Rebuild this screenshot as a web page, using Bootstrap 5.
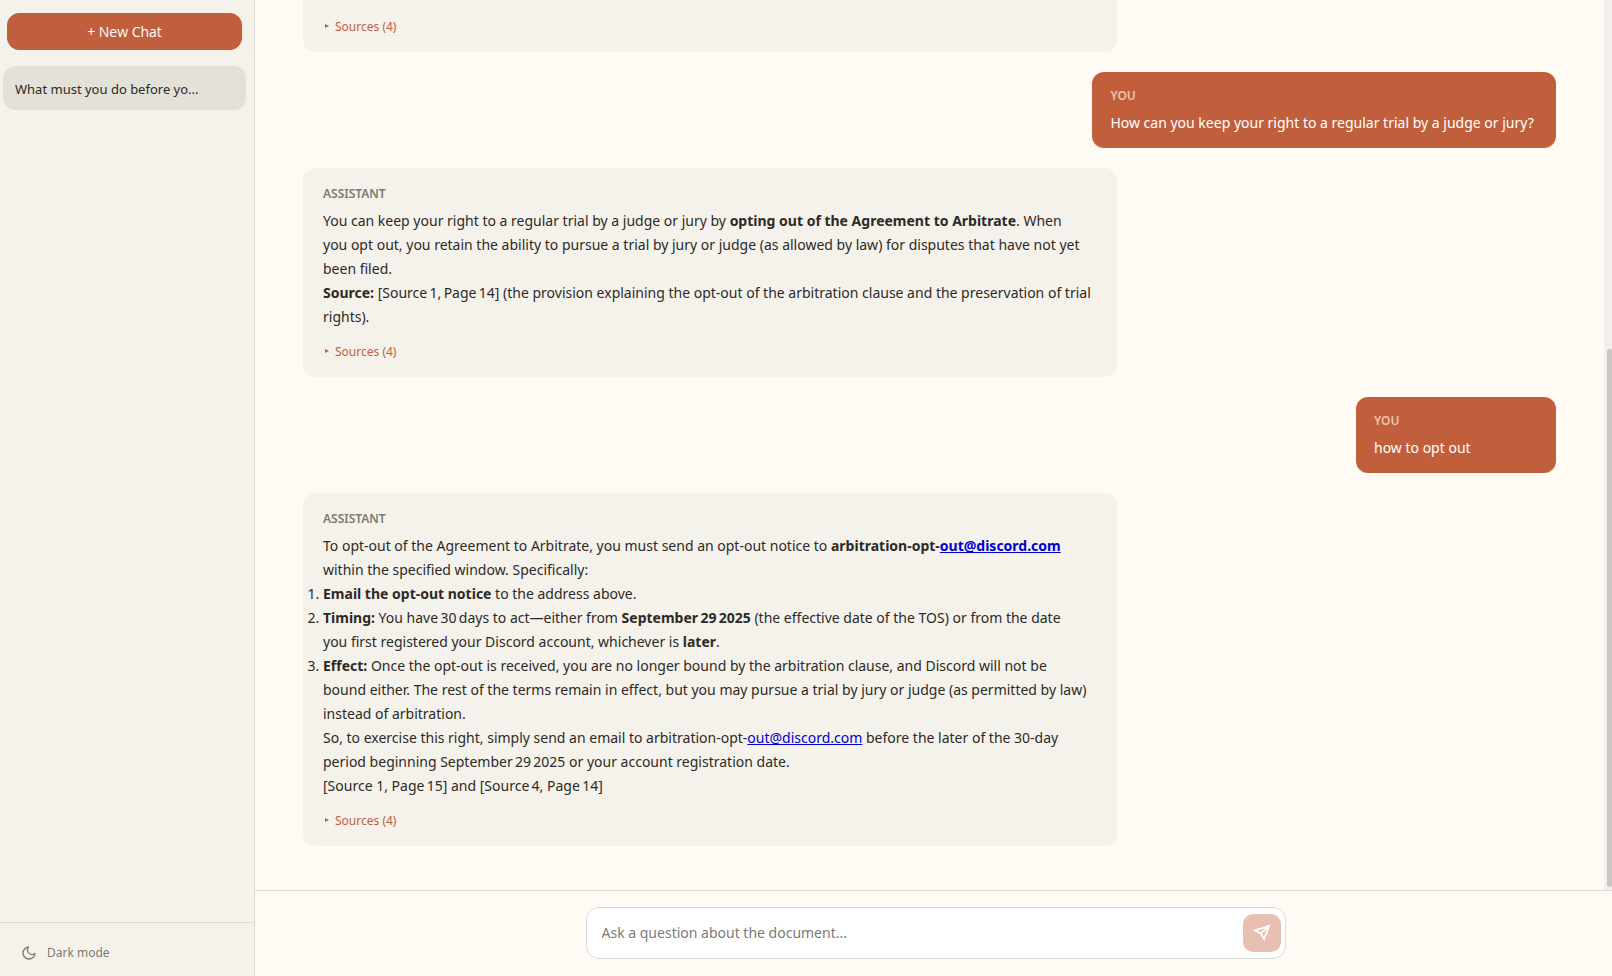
<!DOCTYPE html>
<html lang="en">
<head>
<meta charset="utf-8">
<meta name="viewport" content="width=device-width, initial-scale=1">
<title>Document chat</title>
<link href="https://cdn.jsdelivr.net/npm/bootstrap@5.3.0/dist/css/bootstrap.min.css" rel="stylesheet">
<style>
  :root { --accent: #c15f3c; --paper: #fffbf4; --panel: #f5f2eb; --line: #dddbd5; --ink: #2d2a26; --muted: #7d7a72; }
  body { font-family: "Noto Sans", "Open Sans", sans-serif; font-size: 14px; line-height: 24px; color: var(--ink); background: var(--paper); }
  .sidebar { width: 255px; background: var(--panel); border-right: 1px solid var(--line); }
  .new-chat { margin: 13px 12px 16px 7px; height: 37px; font-family: "Open Sans", "Noto Sans", sans-serif; font-size: 14px; line-height: 20px; border-radius: 12px; --bs-btn-padding-y: 0; --bs-btn-color: #fff; --bs-btn-bg: var(--accent); --bs-btn-border-color: var(--accent); --bs-btn-hover-color: #fff; --bs-btn-hover-bg: #a94f30; --bs-btn-hover-border-color: #a94f30; }
  .chat-item { margin: 0 8px 0 3px; padding: 11px 40px 9px 12px; font-size: 13px; color: var(--ink); background: #e4e1d9; border-radius: 12px; }
  .side-foot { border-top: 1px solid var(--line); padding: 20px 21px 13px; }
  .theme-btn { font-size: 12px; line-height: 20px; color: var(--muted); gap: 10px; }
  .thread { padding: 0 48px 44px; gap: 20px; }
  .msg { border-radius: 12px; max-width: 65%; }
  .msg-bot { width: 65%; background: var(--panel); padding: 17px 20px 15px; }
  .msg-user { min-width: 200px; background: var(--accent); color: #fff; padding: 15px 18px 13px; }
  .msg-long { min-width: 37%; }
  .who { font-size: 12px; line-height: 18px; margin-bottom: 6px; font-weight: 600; color: var(--muted); }
  .msg-user .who { color: #edc3b3; }
  .msg a { color: #0000d0; }
  .msg strong { font-weight: 700; }
  .src { font-size: 12px; line-height: 20px; margin-top: 13px; color: var(--accent); }
  .rail { width: 8px; background: #f1f0ef; }
  .thumb { width: 5px; margin-bottom: 3px; background: #c8c7c6; border-radius: 2px; }
  .composer { border-top: 1px solid var(--line); padding: 16px 16px 17px 20px; }
  .ask { max-width: 700px; height: 52px; background: #fff; border: 1px solid var(--line); border-radius: 13px; padding: 0 4px 0 15px; }
  .ask .form-control { font-size: 14px; line-height: 24px; color: var(--ink); }
  .ask .form-control::placeholder { color: #7d7a75; opacity: 1; }
  .send { width: 38px; height: 38px; border-radius: 10px; background: #e8c0b3; color: #fff; }
</style>
</head>
<body class="vh-100 d-flex overflow-hidden">
  <aside class="sidebar d-flex flex-column flex-shrink-0">
    <button type="button" class="btn new-chat">+ New Chat</button>
    <a href="#" class="chat-item d-block text-decoration-none text-truncate">What must you do before yo...</a>
    <div class="side-foot mt-auto">
      <button type="button" class="theme-btn btn p-0 border-0 d-flex align-items-center">
        <svg width="16" height="16" viewBox="0 0 24 24" fill="none" stroke="currentColor" stroke-width="2" stroke-linecap="round" stroke-linejoin="round" aria-hidden="true"><path d="M21 12.800A9 9 0 1 1 11.200 3a7 7 0 0 0 9.800 9.800z"/></svg>
        Dark mode
      </button>
    </div>
  </aside>

  <main class="d-flex flex-column flex-grow-1">
    <div class="d-flex flex-grow-1 overflow-hidden">
      <section class="thread d-flex flex-column justify-content-end flex-grow-1 overflow-hidden">
        <article class="msg msg-bot flex-shrink-0 pt-5">
          <button type="button" class="src btn p-0 border-0 d-flex align-items-center"><svg class="me-1" width="8" height="8" viewBox="0 0 8 8" fill="currentColor" aria-hidden="true"><path d="M2 1 6 3 2 5z"/></svg>Sources (4)</button>
        </article>

        <article class="msg msg-user msg-long flex-shrink-0 align-self-end">
          <div class="who">YOU</div>
          <div>How can you keep your right to a regular trial by a judge or jury?</div>
        </article>

        <article class="msg msg-bot flex-shrink-0">
          <div class="who">ASSISTANT</div>
          <p class="m-0">You can keep your right to a regular trial by a judge or jury by <strong>opting out of the Agreement to Arbitrate</strong>. When<br> you opt out, you retain the ability to pursue a trial by jury or judge (as allowed by law) for disputes that have not yet<br> been filed.</p>
          <p class="m-0"><strong>Source:</strong> [Source&#8239;1,&#8239;Page&#8239;14] (the provision explaining the opt-out of the arbitration clause and the preservation of trial rights).</p>
          <button type="button" class="src btn p-0 border-0 d-flex align-items-center"><svg class="me-1" width="8" height="8" viewBox="0 0 8 8" fill="currentColor" aria-hidden="true"><path d="M2 1 6 3 2 5z"/></svg>Sources (4)</button>
        </article>

        <article class="msg msg-user flex-shrink-0 align-self-end">
          <div class="who">YOU</div>
          <div>how to opt out</div>
        </article>

        <article class="msg msg-bot flex-shrink-0">
          <div class="who">ASSISTANT</div>
          <p class="m-0">To opt-out of the Agreement to Arbitrate, you must send an opt-out notice to <strong>arbitration-opt-<a href="mailto:out@discord.com">out@discord.com</a></strong> within the specified window. Specifically:</p>
          <ol class="m-0 p-0">
            <li><strong>Email the opt-out notice</strong> to the address above.</li>
            <li><strong>Timing:</strong> You have&#8239;30&#8239;days to act—either from <strong>September&#8239;29&#8239;2025</strong> (the effective date of the TOS) or from the date<br> you first registered your Discord account, whichever is <strong>later</strong>.</li>
            <li><strong>Effect:</strong> Once the opt-out is received, you are no longer bound by the arbitration clause, and Discord will not be<br> bound either. The rest of the terms remain in effect, but you may pursue a trial by jury or judge (as permitted by law)<br> instead of arbitration.</li>
          </ol>
          <p class="m-0">So, to exercise this right, simply send an email to arbitration-opt-<a href="mailto:out@discord.com">out@discord.com</a> before the later of the 30-day period beginning September&#8239;29&#8239;2025 or your account registration date.</p>
          <p class="m-0">[Source 1, Page&#8239;15] and [Source&#8239;4, Page&#8239;14]</p>
          <button type="button" class="src btn p-0 border-0 d-flex align-items-center"><svg class="me-1" width="8" height="8" viewBox="0 0 8 8" fill="currentColor" aria-hidden="true"><path d="M2 1 6 3 2 5z"/></svg>Sources (4)</button>
        </article>
      </section>
      <div class="rail d-flex flex-column justify-content-end align-items-end flex-shrink-0" aria-hidden="true">
        <div class="thumb" style="height: 60.4%"></div>
      </div>
    </div>

    <form class="composer">
      <div class="ask d-flex align-items-center mx-auto">
        <input id="question" type="text" class="form-control border-0 p-0 bg-transparent shadow-none" placeholder="Ask a question about the document..." aria-label="Ask a question about the document">
        <button type="button" class="send btn border-0 p-0 d-flex align-items-center justify-content-center flex-shrink-0" aria-label="Send">
          <svg width="20" height="20" viewBox="0 0 24 24" fill="none" stroke="currentColor" stroke-width="2" stroke-linejoin="miter" aria-hidden="true"><path d="M20.500 3.500 3.500 9 10.500 12.500 14.500 19.500zM20.500 3.500 10.500 12.500"/></svg>
        </button>
      </div>
    </form>
  </main>
<script src="https://cdn.jsdelivr.net/npm/bootstrap@5.3.0/dist/js/bootstrap.bundle.min.js"></script>
</body>
</html>
